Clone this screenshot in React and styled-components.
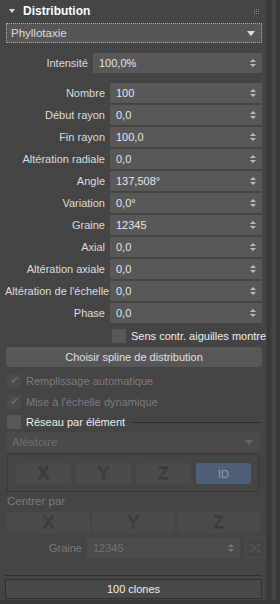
import React from 'react'
import styled, { createGlobalStyle } from 'styled-components'

const Global = createGlobalStyle`
  body{
    margin:0;
    background:#3a3a3a;
    font-family:'Liberation Sans', Arial, sans-serif;
    font-size:11px;
  }
`;

const Frame = styled.div`
  width:280px;
  height:604px;
  display:flex;
  background:#3a3a3a;
  overflow:hidden;
`;

const Panel = styled.div`
  width:268px;
  height:600px;
  background:#444;
  border-right:1px solid #333;
  box-sizing:border-box;
  display:flex;
  flex-direction:column;
  padding:0 5px 0 5px;
`;

const Scroll = styled.div`
  width:11px;
  display:flex;
  padding-left:3px;
  box-sizing:border-box;
`;

const ScrollTrack = styled.div`
  width:4px;
  height:600px;
  background:#474747;
  border-left:1px solid #3e3e3e;
  border-right:1px solid #363636;
`;

const Header = styled.div`
  height:22px;
  display:flex;
  align-items:center;
  gap:8px;
  padding-left:4px;
  color:#fff;
  font-weight:bold;
  font-size:12px;
`;

const Grip = styled.div`
  margin-left:auto;
  margin-right:3px;
  width:5px;
  display:grid;
  grid-template-columns:repeat(3,1px);
  gap:1px;
  & span{ width:1px; height:1px; background:#888; }
`;

const Select = styled.div`
  height:20px;
  margin:${p => p.$m || '0'};
  box-sizing:border-box;
  display:flex;
  align-items:center;
  padding:0 6px 0 4px;
  background:${p => p.$disabled ? '#4a4a4a' : '#565656'};
  color:${p => p.$disabled ? '#6e6e6e' : '#ddd'};
  border:1px ${p => p.$focus ? 'dotted #aaa' : 'solid #4a4a4a'};
  font-size:11.5px;
`;

const Arrow = styled.span`
  margin-left:${p => p.$left ? '0' : 'auto'};
  width:0; height:0;
  border-left:${p => p.$s || 4}px solid transparent;
  border-right:${p => p.$s || 4}px solid transparent;
  border-top:${p => (p.$s || 4) + 1}px solid ${p => p.$disabled ? '#666' : '#ddd'};
`;

const Rows = styled.div`
  display:flex;
  flex-direction:column;
  gap:2px;
  margin:${p => p.$m || '0'};
`;

const Row = styled.div`
  display:grid;
  grid-template-columns:${p => p.$w}px 1fr;
  align-items:center;
  height:20px;
`;

const Label = styled.label`
  text-align:right;
  padding-right:5px;
  color:${p => p.$disabled ? '#7a7a7a' : '#ddd'};
  font-size:11px;
  white-space:nowrap;
`;

const Field = styled.div`
  height:20px;
  box-sizing:border-box;
  background:${p => p.$disabled ? '#4b4b4b' : '#585858'};
  color:${p => p.$disabled ? '#727272' : '#e6e6e6'};
  display:flex;
  align-items:center;
  padding:0 6px 0 6px;
  font-size:11px;
`;

const Spin = styled.span`
  margin-left:auto;
  display:flex;
  flex-direction:column;
  gap:2px;
  &::before,&::after{
    content:'';
    width:0;height:0;
    border-left:3px solid transparent;
    border-right:3px solid transparent;
  }
  &::before{ border-bottom:3px solid ${p => p.$disabled ? '#777' : '#bbb'}; }
  &::after{ border-top:3px solid ${p => p.$disabled ? '#777' : '#bbb'}; }
`;

const CheckRow = styled.div`
  display:flex;
  align-items:center;
  gap:5px;
  height:${p => p.$h || 20}px;
  margin:${p => p.$m || '0'};
  color:${p => p.$disabled ? '#7c7c7c' : '#eee'};
  font-size:11px;
  white-space:nowrap;
`;

const Box = styled.span`
  width:12px;
  height:12px;
  flex:none;
  background:${p => p.$disabled ? '#4a4a4a' : '#585858'};
  border:1px solid ${p => p.$disabled ? '#4a4a4a' : '#555'};
  display:flex;
  align-items:center;
  justify-content:center;
  color:#6a6a6a;
  font-size:11px;
  line-height:1;
`;

const Rule = styled.span`
  flex:1;
  height:1px;
  background:#2e2e2e;
  margin-left:1px;
`;

const Button = styled.div`
  height:20px;
  margin:${p => p.$m || '0'};
  box-sizing:border-box;
  background:#575757;
  border-radius:3px;
  display:flex;
  align-items:center;
  justify-content:center;
  color:#e0e0e0;
  font-size:11px;
`;

const Group = styled.div`
  margin:2px 2px 0 2px;
  height:38px;
  box-sizing:border-box;
  border:1px solid #383838;
  border-radius:2px;
  padding:8px 8px 0 8px;
  display:grid;
  grid-template-columns:repeat(4,1fr);
  gap:5px;
`;

const Axis = styled.div`
  height:21px;
  box-sizing:border-box;
  border-radius:3px;
  background:${p => p.$on ? '#4f5f78' : '#4a4a4a'};
  display:flex;
  align-items:center;
  justify-content:center;
  font-size:${p => p.$small ? 11 : 17}px;
  font-weight:normal;
  color:${p => p.$on ? '#97a2b4' : 'transparent'};
  -webkit-text-stroke:${p => p.$on ? '0' : '0.9px #373737'};
`;

const Axes = styled.div`
  margin:2px 2px 0 2px;
  display:grid;
  grid-template-columns:repeat(3,1fr);
  gap:2px;
`;

const Caption = styled.div`
  margin:3px 0 0 2px;
  height:15px;
  color:#7c7c7c;
  font-size:11.5px;
`;

const SeedRow = styled.div`
  display:grid;
  grid-template-columns:82px 1fr 20px;
  gap:0;
  align-items:center;
  margin:4px 2px 0 0;
  height:21px;
`;

const Dice = styled.div`
  margin-left:5px;
  height:21px;
  width:20px;
  box-sizing:border-box;
  border:1px solid #4d4d4d;
  border-radius:2px;
  display:flex;
  align-items:center;
  justify-content:center;
`;

const Separator = styled.div`
  margin:17px 0 0 0;
  height:1px;
  background:#2f2f2f;
`;

const Status = styled.div`
  margin:3px 0 0 0;
  height:20px;
  box-sizing:border-box;
  border:1px solid #2f2f2f;
  background:#484848;
  display:flex;
  align-items:center;
  justify-content:center;
  color:#f0f0f0;
  font-size:11px;
`;

const params = [
  ['Nombre', '100'],
  ['Début rayon', '0,0'],
  ['Fin rayon', '100,0'],
  ['Altération radiale', '0,0'],
  ['Angle', '137,508°'],
  ['Variation', '0,0°'],
  ['Graine', '12345'],
  ['Axial', '0,0'],
  ['Altération axiale', '0,0'],
  ["Altération de l'échelle", '0,0'],
  ['Phase', '0,0'],
];

export default function App() {
  return (
    <Frame>
      <Global />
      <Panel>
        <Header>
          <Arrow $left $s={3} />
          <span>Distribution</span>
          <Grip>{Array.from({ length: 9 }).map((_, i) => <span key={i} />)}</Grip>
        </Header>
        <Select $focus $m="1px 0 0 1px">Phyllotaxie<Arrow /></Select>

        <Rows $m="10px 0 0 0">
          <Row $w={88}>
            <Label>Intensité</Label>
            <Field>100,0%<Spin /></Field>
          </Row>
        </Rows>

        <Rows $m="10px 0 0 0">
          {params.map(([k, v]) => (
            <Row $w={105} key={k}>
              <Label>{k}</Label>
              <Field>{v}<Spin /></Field>
            </Row>
          ))}
        </Rows>

        <CheckRow $h={22} $m="2px 0 0 107px">
          <Box />Sens contr. aiguilles montre
        </CheckRow>
        <Button $m="0 0 0 1px">Choisir spline de distribution</Button>

        <CheckRow $disabled $m="3px 0 0 2px" $h={21}>
          <Box $disabled>✔</Box>Remplissage automatique
        </CheckRow>
        <CheckRow $disabled $h={21} $m="0 0 0 2px">
          <Box $disabled>✔</Box>Mise à l'échelle dynamique
        </CheckRow>
        <CheckRow $h={20} $m="0 0 0 2px">
          <Box />Réseau par élément<Rule />
        </CheckRow>

        <Select $disabled $m="0 2px 0 2px">Aléatoire<Arrow $disabled /></Select>
        <Group>
          <Axis>X</Axis>
          <Axis>Y</Axis>
          <Axis>Z</Axis>
          <Axis $on $small>ID</Axis>
        </Group>
        <Caption>Centrer par</Caption>
        <Axes>
          <Axis>X</Axis>
          <Axis>Y</Axis>
          <Axis>Z</Axis>
        </Axes>
        <SeedRow>
          <Label $disabled>Graine</Label>
          <Field $disabled>12345<Spin $disabled /></Field>
          <Dice>
            <svg width="14" height="10" viewBox="0 0 14 10" fill="none" stroke="#545454" strokeWidth="1.2">
              <path d="M1 2h3l5 6h3M1 8h3l5-6h3M10 0.5l2 1.5-2 1.5M10 6.5l2 1.5-2 1.5" />
            </svg>
          </Dice>
        </SeedRow>

        <Separator />
        <Status>100 clones</Status>
      </Panel>
      <Scroll><ScrollTrack /></Scroll>
    </Frame>
  )
}
